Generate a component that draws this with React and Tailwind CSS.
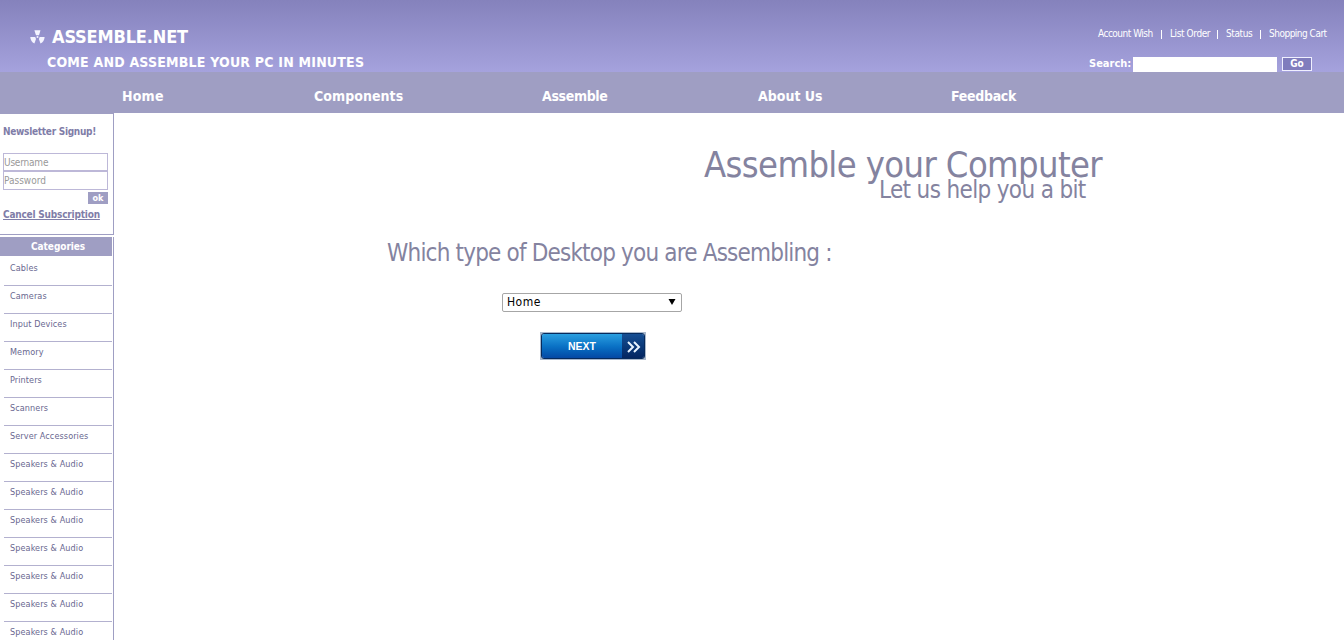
const categories = [
  'Cables',
  'Cameras',
  'Input Devices',
  'Memory',
  'Printers',
  'Scanners',
  'Server Accessories',
  ...Array(7).fill('Speakers & Audio'),
];

function RadiationIcon() {
  return (
    <svg className="h-[14px] w-[15px]" viewBox="0 0 15 14" fill="#f4f4ff">
      <path d="M4.4 0.3H10.5L9 5.2H6Z" />
      <path d="M0.3 7L5.2 6.9L6 9L4.4 13.5Q0.6 11.9 0.3 7Z" />
      <path d="M14.6 7L9.7 6.9L8.9 9L10.5 13.5Q14.3 11.9 14.6 7Z" />
      <circle cx="7.5" cy="7" r="1" />
    </svg>
  );
}

function Header() {
  return (
    <header className="flex h-[72px] justify-between bg-linear-to-b from-[#8582bc] to-[#a5a2dd] text-white">
      <div className="pt-[26px] pl-[30px] font-bold">
        <div className="flex h-[22px] items-center">
          <RadiationIcon />
          <span className="ml-[7px] text-[18px] leading-[22px] tracking-[-0.15px]">ASSEMBLE.NET</span>
        </div>
        <div className="mt-[5px] ml-[17px] text-[14px] leading-[18px] tracking-[0.2px]">COME AND ASSEMBLE YOUR PC IN MINUTES</div>
      </div>
      <div className="w-[256px] pt-[27px]">
        <nav className="flex h-[14px] items-center pl-[10px] text-[10px] leading-[14px] tracking-[-0.5px] whitespace-nowrap">
          <a className="w-[63px]">Account Wish</a>
          <a className="flex w-[56px] items-center tracking-[-0.4px]"><i className="mr-[8px] h-[9px] w-px bg-white" />List Order</a>
          <a className="flex w-[43px] items-center tracking-[-0.4px]"><i className="mr-[8px] h-[9px] w-px bg-white" />Status</a>
          <a className="flex items-center"><i className="mr-[8px] h-[9px] w-px bg-white" />Shopping Cart</a>
        </nav>
        <form className="mt-[16px] flex h-[15px] items-start">
          <label className="w-[45px] pl-px text-[11px] leading-[14px] font-bold">Search:</label>
          <div className="h-[15px] w-[144px] bg-white" />
          <button type="button" className="ml-[5px] h-[14px] w-[30px] border border-[#f0f0ff] bg-[#807dbd] text-[10px] leading-[12px] font-bold">Go</button>
        </form>
      </div>
    </header>
  );
}

function MainNav() {
  return (
    <nav className="flex h-[41px] bg-[#9f9ec3] pl-[122px] text-[14px] leading-[48px] font-bold text-white">
      <a className="w-[192px] tracking-[0.2px]">Home</a>
      <a className="w-[228px] tracking-[0.05px]">Components</a>
      <a className="w-[216px] tracking-[-0.35px]">Assemble</a>
      <a className="w-[193px]">About Us</a>
      <a className="tracking-[-0.3px]">Feedback</a>
    </nav>
  );
}

function Sidebar() {
  return (
    <aside className="flex w-[114px] shrink-0 flex-col">
      <section className="h-[122px] border-t border-r border-b border-[#9f9ec3] pl-[3px] font-bold text-[#7f7da8]">
        <h2 className="mt-[11px] text-[10px] leading-[14px] tracking-[-0.28px] whitespace-nowrap">Newsletter Signup!</h2>
        <div className="mt-[14px] h-[18px] w-[105px] border border-[#bdb8d8] text-[10px] leading-[17px] font-normal tracking-[-0.2px] text-[#999999]">Username</div>
        <div className="h-[19px] w-[105px] border border-[#bdb8d8] text-[10px] leading-[17px] font-normal text-[#999999]">Password</div>
        <div className="mt-[2px] ml-[85px] h-[12px] w-[20px] bg-[#9f9ec3] text-center text-[9px] leading-[12px] text-white">ok</div>
        <a className="mt-[4px] block text-[10px] leading-[14px] tracking-[-0.2px] whitespace-nowrap underline">Cancel Subscription</a>
      </section>
      <section className="mt-[2px] h-[403px] overflow-hidden border-r border-[#9f9ec3]">
        <h2 className="h-[19px] w-[112px] bg-[#9f9ec3] pl-[31px] text-[10px] leading-[19px] font-bold tracking-[-0.05px] text-white">Categories</h2>
        <ul className="pl-[4px] tracking-[0.1px]">
          {categories.map((name, i) => (
            <li key={i} className={i === 0 ? 'h-[30px] w-[108px] border-b border-[#b3b1cf] pl-[6px] text-[9px] leading-[24px] text-[#69678f]' : 'h-[28px] w-[108px] border-b border-[#b3b1cf] pl-[6px] text-[9px] leading-[20px] text-[#69678f]'}>{name}</li>
          ))}
        </ul>
      </section>
    </aside>
  );
}

function NextButton() {
  return (
    <button type="button" className="ml-[153px] flex h-[28px] w-[106px] bg-[#a9b8cc] p-px">
      <span className="flex h-[26px] w-full overflow-hidden rounded-[3px] border border-[#062a5c]">
        <span className="h-full w-[80px] bg-linear-to-b from-[#2a9fe0] via-[#0b73c6] to-[#0548a4] text-center font-['Liberation_Sans',sans-serif] text-[10.5px] leading-[24px] font-bold text-white">NEXT</span>
        <span className="flex h-full flex-1 items-center justify-center bg-linear-to-b from-[#164f94] to-[#032561] pt-px pl-[2px]">
          <svg className="h-[12px] w-[14px]" viewBox="0 0 14 12" fill="none" stroke="#e8f4ff" strokeWidth="2">
            <path d="M1 1L6 6L1 11M7 1L12 6L7 11" />
          </svg>
        </span>
      </span>
    </button>
  );
}

function MainContent() {
  return (
    <main className="flex-1 pt-[30px] pl-[273px] text-[#84839f]">
      <h1 className="ml-[317px] text-[36px] leading-[44px] tracking-[-0.6px] whitespace-nowrap">Assemble your Computer</h1>
      <p className="-mt-[12px] ml-[492px] text-[24px] leading-[30px] tracking-[-0.65px] whitespace-nowrap">Let us help you a bit</p>
      <p className="mt-[33px] text-[24px] leading-[30px] tracking-[-0.82px] whitespace-nowrap">Which type of Desktop you are Assembling :</p>
      <div className="mt-[25px] mb-[20px] ml-[115px] flex h-[19px] w-[180px] items-center justify-between rounded-[2px] border border-[#a6a6a6] pr-[5px] pl-[4px] text-[12px] leading-[17px] tracking-[0.5px] text-black">
        <span>Home</span>
        <svg className="mb-px h-[6px] w-[8px]" viewBox="0 0 8 6"><path d="M0.5 0H7.5L4 6Z" /></svg>
      </div>
      <NextButton />
    </main>
  );
}

export default function App() {
  return (
    <div className="flex h-[640px] w-[1344px] flex-col overflow-hidden bg-white font-['DejaVu_Sans_Condensed','DejaVu_Sans',sans-serif]">
      <Header />
      <MainNav />
      <div className="flex flex-1">
        <Sidebar />
        <MainContent />
      </div>
    </div>
  );
}
